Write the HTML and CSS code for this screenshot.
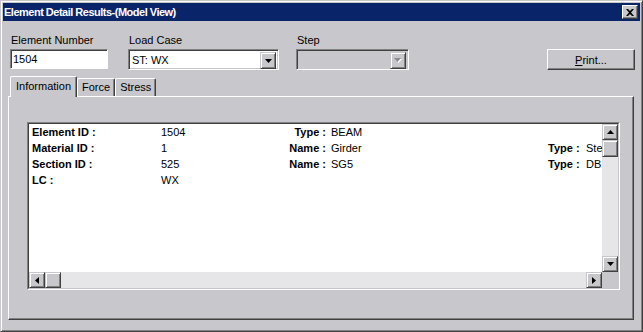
FILE: index.html
```html
<!DOCTYPE html>
<html lang="en">
<head>
    <meta charset="UTF-8">
    <meta name="viewport" content="width=device-width, initial-scale=1.0">
    <title>Element Detail Results-(Model View)</title>
    <link rel="stylesheet" href="styles.css">
</head>
<body>
    <div class="window">
        <div class="titlebar">
            <span class="title">Element Detail Results-(Model View)</span>
            <div class="close-btn">
                <svg width="8" height="7" viewBox="0 0 8 7"><path d="M0 0h2l2 2 2-2h2L5 3.5 8 7H6L4 5 2 7H0l3-3.5z" fill="#000"/></svg>
            </div>
        </div>
        <div class="client">
            <div class="top-row">
                <div class="field field-elem">
                    <div class="label">Element Number</div>
                    <div class="edit">1504</div>
                </div>
                <div class="field field-load">
                    <div class="label">Load Case</div>
                    <div class="combo">
                        <span class="combo-text">ST: WX</span>
                        <span class="drop-btn"><svg width="7" height="4" viewBox="0 0 7 4"><path d="M0 0h7L3.5 4z" fill="#000"/></svg></span>
                    </div>
                </div>
                <div class="field field-step">
                    <div class="label">Step</div>
                    <div class="combo disabled">
                        <span class="combo-text"></span>
                        <span class="drop-btn"><svg width="8" height="5" viewBox="0 0 8 5"><path d="M1 1h7L4.5 5z" fill="#fff"/><path d="M0 0h7L3.5 4z" fill="#8a898d"/></svg></span>
                    </div>
                </div>
                <div class="print-btn"><span><u>P</u>rint...</span></div>
            </div>
            <div class="tab-control">
                <div class="tab-strip">
                    <div class="tab active">Information</div>
                    <div class="tab">Force</div>
                    <div class="tab">Stress</div>
                </div>
                <div class="tab-panel">
                    <div class="listbox">
                        <div class="listbox-inner">
                            <div class="list-view">
                                <div class="info-grid">
                                    <span class="key">Element ID :</span><span>1504</span><span class="key right">Type :</span><span class="val">BEAM</span><span></span><span></span>
                                    <span class="key">Material ID :</span><span>1</span><span class="key right">Name :</span><span class="val">Girder</span><span class="key">Type :</span><span>Steel</span>
                                    <span class="key">Section ID :</span><span>525</span><span class="key right">Name :</span><span class="val">SG5</span><span class="key">Type :</span><span>DB.</span>
                                    <span class="key">LC :</span><span>WX</span><span></span><span></span><span></span><span></span>
                                </div>
                            </div>
                            <div class="vscroll">
                                <div class="sb-btn"><svg width="7" height="4" viewBox="0 0 7 4"><path d="M3.5 0L7 4H0z" fill="#000"/></svg></div>
                                <div class="sb-thumb"></div>
                                <div class="sb-track"></div>
                                <div class="sb-btn"><svg width="7" height="4" viewBox="0 0 7 4"><path d="M0 0h7L3.5 4z" fill="#000"/></svg></div>
                            </div>
                            <div class="hscroll">
                                <div class="sb-btn"><svg width="4" height="7" viewBox="0 0 4 7"><path d="M0 3.5L4 0v7z" fill="#000"/></svg></div>
                                <div class="sb-thumb"></div>
                                <div class="sb-track"></div>
                                <div class="sb-btn"><svg width="4" height="7" viewBox="0 0 4 7"><path d="M0 0l4 3.5L0 7z" fill="#000"/></svg></div>
                            </div>
                            <div class="sb-corner"></div>
                        </div>
                    </div>
                </div>
            </div>
        </div>
    </div>
</body>
</html>
```

FILE: styles.css
```css
* {
    box-sizing: border-box;
}
body {
    margin: 0;
    background: #c8c7cb;
    font-family: "Liberation Sans", Arial, sans-serif;
    font-size: 11px;
    color: #000;
}
.window {
    width: 643px;
    height: 332px;
    display: flex;
    flex-direction: column;
    background: #c8c7cb;
    border: 1px solid;
    border-color: #c8c7cb #404040 #404040 #c8c7cb;
    box-shadow: inset 1px 1px #fff, inset -1px -1px #808080;
    padding: 2px;
}
.titlebar {
    height: 18px;
    flex-shrink: 0;
    background: #0a246a;
    color: #fff;
    display: flex;
    align-items: center;
    justify-content: space-between;
    padding: 0 2px 0 1px;
}
.title {
    font-weight: bold;
    font-size: 11px;
    letter-spacing: -0.5px;
}
.close-btn {
    width: 16px;
    height: 14px;
    display: flex;
    align-items: center;
    justify-content: center;
    background: #c8c7cb;
    border: 1px solid;
    border-color: #fff #404040 #404040 #fff;
    box-shadow: inset -1px -1px #808080;
}
.client {
    flex: 1;
    display: flex;
    flex-direction: column;
    padding: 13px 6px 9px 5px;
}
.top-row {
    display: flex;
    align-items: flex-start;
    height: 36px;
}
.label {
    line-height: 13px;
    padding-left: 1px;
    margin-bottom: 2px;
    white-space: nowrap;
}
.field-elem {
    margin-left: 2px;
    width: 98px;
}
.field-load {
    margin-left: 20px;
    width: 151px;
}
.field-step {
    margin-left: 17px;
    width: 113px;
}
.edit {
    height: 20px;
    background: #fff;
    border: 1px solid;
    border-color: #808080 #fff #fff #808080;
    box-shadow: inset 1px 1px #404040;
    padding: 2px 1px 0 2px;
    line-height: 15px;
}
.combo {
    height: 21px;
    display: flex;
    background: #fff;
    border: 1px solid;
    border-color: #808080 #fff #fff #808080;
    box-shadow: inset 1px 1px #404040, inset -1px -1px #c8c7cb;
    padding: 2px;
}
.combo.disabled {
    background: #c8c7cb;
}
.combo-text {
    flex: 1;
    padding-left: 1px;
    line-height: 16px;
}
.drop-btn {
    width: 16px;
    height: 17px;
    display: flex;
    align-items: center;
    justify-content: center;
    background: #c8c7cb;
    border: 1px solid;
    border-color: #c8c7cb #404040 #404040 #c8c7cb;
    box-shadow: inset 1px 1px #fff, inset -1px -1px #808080;
}
.print-btn {
    margin-left: auto;
    margin-right: -1px;
    margin-top: 15px;
    width: 88px;
    height: 21px;
    display: flex;
    align-items: center;
    justify-content: center;
    border: 1px solid;
    border-color: #fff #404040 #404040 #fff;
    box-shadow: inset -1px -1px #808080;
}
.tab-control {
    flex: 1;
    display: flex;
    flex-direction: column;
    margin-top: 6px;
}
.tab-strip {
    display: flex;
    align-items: flex-end;
    height: 20px;
    padding-left: 2px;
}
.tab {
    height: 18px;
    line-height: 17px;
    padding: 0 4px;
    border: 1px solid;
    border-bottom: none;
    border-color: #fff #404040 #404040 #fff;
    border-radius: 2px 2px 0 0;
    box-shadow: inset -1px 0 #808080;
}
.tab.active {
    height: 21px;
    margin-bottom: -1px;
    padding: 0 5px;
    position: relative;
    z-index: 1;
    background: #c8c7cb;
    line-height: 18px;
}
.tab-panel {
    flex: 1;
    border: 1px solid;
    border-color: #fff #404040 #404040 #fff;
    box-shadow: inset -1px -1px #808080;
    padding: 25px 0 0 18px;
}
.listbox {
    width: 593px;
    height: 168px;
    border: 1px solid;
    border-color: #808080 #fff #fff #808080;
}
.listbox-inner {
    height: 100%;
    display: grid;
    grid-template-columns: 1fr 16px;
    grid-template-rows: 1fr 16px;
    border: 1px solid;
    border-color: #404040 #c8c7cb #c8c7cb #404040;
}
.list-view {
    background: #fff;
    overflow: hidden;
}
.info-grid {
    display: grid;
    grid-template-columns: 129px 100px 65px 222px 38px 60px;
    grid-auto-rows: 16px;
    line-height: 16px;
    padding-left: 3px;
    white-space: nowrap;
}
.key {
    font-weight: bold;
}
.right {
    text-align: right;
}
.val {
    padding-left: 5px;
}
.vscroll,
.hscroll {
    display: flex;
    background: #e6e5e8;
}
.vscroll {
    flex-direction: column;
}
.sb-btn,
.sb-thumb {
    width: 16px;
    height: 16px;
    flex-shrink: 0;
    display: flex;
    align-items: center;
    justify-content: center;
    background: #c8c7cb;
    border: 1px solid;
    border-color: #c8c7cb #404040 #404040 #c8c7cb;
    box-shadow: inset 1px 1px #fff, inset -1px -1px #808080;
}
.vscroll .sb-thumb {
    height: 17px;
}
.sb-track {
    flex: 1;
}
.sb-corner {
    background: #c8c7cb;
}
```
